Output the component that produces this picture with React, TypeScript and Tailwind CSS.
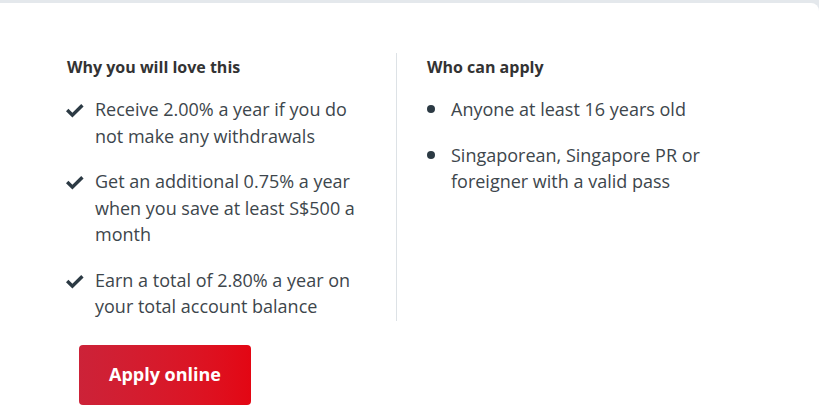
import { type ReactNode } from 'react'

const perks = [
  'Receive 2.00% a year if you do not make any withdrawals',
  'Get an additional 0.75% a year when you save at least S$500 a month',
  'Earn a total of 2.80% a year on your total account balance',
]

const eligibility = [
  'Anyone at least 16 years old',
  'Singaporean, Singapore PR or foreigner with a valid pass',
]

function Check() {
  return (
    <svg width="18" height="14" viewBox="0 0 18 14" className="mt-[8px] -ml-[1px] shrink-0">
      <path d="M0 7.2 L2.4 4.8 L6.4 8.8 L15.2 0 L17.6 2.4 L6.4 13.6 Z" fill="#2c3a44" />
    </svg>
  )
}

function Item({ marker, width, children }: { marker: ReactNode; width: string; children: ReactNode }) {
  return (
    <li className="flex items-start">
      <div className={width + ' shrink-0'}>{marker}</div>
      <span>{children}</span>
    </li>
  )
}

export default function App() {
  return (
    <div className="min-h-[407px] bg-[#e4e8ec] pt-[3px] font-['Open_Sans',sans-serif] text-[#333d44]">
      <div className="bg-white rounded-tr-[8px] min-h-[404px] pt-[50px] pl-[67px]">
        <div className="flex">
          <div className="w-[330px] pr-[30px] pb-[1px] border-r border-[#dde2e6]">
            <h3 className="text-[16px] font-bold leading-[28px] text-[#333]">Why you will love this</h3>
            <ul className="mt-[15px] space-y-[19px] text-[18px] leading-[26.5px] text-[#3d464c]">
              {perks.map(p => (
                <Item key={p} width="w-[28px]" marker={<Check />}>{p}</Item>
              ))}
            </ul>
          </div>
          <div className="w-[370px] pl-[30px] pr-[30px]">
            <h3 className="text-[16px] font-bold leading-[28px] text-[#333]">Who can apply</h3>
            <ul className="mt-[15px] space-y-[19px] text-[18px] leading-[26.5px] text-[#3d464c]">
              {eligibility.map(p => (
                <Item key={p} width="w-[24px]" marker={<span className="block w-[8px] h-[8px] rounded-full bg-[#2c3a44] mt-[9px]" />}>{p}</Item>
              ))}
            </ul>
          </div>
        </div>
        <button className="mt-[24px] ml-[12px] w-[172px] h-[60px] rounded-[4px] bg-gradient-to-r from-[#cc2238] to-[#e30613] text-white text-[18px] font-bold">
          Apply online
        </button>
      </div>
    </div>
  )
}
